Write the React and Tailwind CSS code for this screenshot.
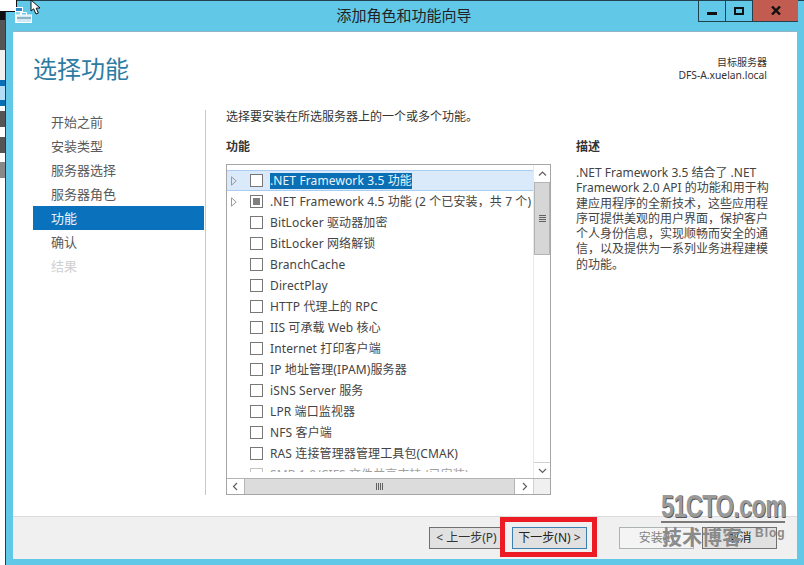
import React from 'react';

const sans = 'font-["Noto_Sans","Noto_Sans_CJK_SC",sans-serif]';

const navItems = [
    { label: '开始之前' },
    { label: '安装类型' },
    { label: '服务器选择' },
    { label: '服务器角色' },
    { label: '功能', active: true },
    { label: '确认' },
    { label: '结果', disabled: true },
];

const features = [
    { label: '.NET Framework 3.5 功能', expand: true, selected: true },
    { label: '.NET Framework 4.5 功能 (2 个已安装，共 7 个)', expand: true, partial: true },
    { label: 'BitLocker 驱动器加密' },
    { label: 'BitLocker 网络解锁' },
    { label: 'BranchCache' },
    { label: 'DirectPlay' },
    { label: 'HTTP 代理上的 RPC' },
    { label: 'IIS 可承载 Web 核心' },
    { label: 'Internet 打印客户端' },
    { label: 'IP 地址管理(IPAM)服务器' },
    { label: 'iSNS Server 服务' },
    { label: 'LPR 端口监视器' },
    { label: 'NFS 客户端' },
    { label: 'RAS 连接管理器管理工具包(CMAK)' },
    { label: 'SMB 1.0/CIFS 文件共享支持 (已安装)', disabled: true },
];

const description = [
    '.NET Framework 3.5 结合了 .NET',
    'Framework 2.0 API 的功能和用于构',
    '建应用程序的全新技术，这些应用程',
    '序可提供美观的用户界面，保护客户',
    '个人身份信息，实现顺畅而安全的通',
    '信，以及提供为一系列业务进程建模',
    '的功能。',
];

// desktop peeking out to the left of the window
const stripBands = [
    'h-[12px] bg-white',
    'h-[8px] bg-[#111]',
    'h-[30px] bg-[#555]',
    'h-[30px] bg-[#f0f0f0]',
    'h-[6px] bg-[#0a6eb4]',
    'h-[14px] bg-[#b5dcf5]',
    'h-[6px] bg-[#0a6eb4]',
    'h-[5px] bg-white',
    'h-[16px] bg-[#555]',
    'h-[10px] bg-white',
    'h-[16px] bg-[#555]',
    'h-[9px] bg-white',
    'h-[16px] bg-[#888]',
    'flex-1 bg-white',
];

const Arrow = ({ d }) => (
    <svg width="9" height="9" viewBox="0 0 9 9" fill="none" stroke="#606060" strokeWidth="1.2">
        <path d={d} />
    </svg>
);

const Row = ({ item }) => (
    <div className={`flex items-center h-[21px] pl-[4px] shrink-0 ${item.selected ? 'bg-[#dbeafb] border-y border-[#a9cdf0]' : ''}`}>
        <div className="w-[19px] shrink-0">
            {item.expand && (
                <svg width="6" height="10" viewBox="0 0 6 10" fill="none" stroke="#9a9a9a">
                    <path d="M0.5 0.8 L5.2 5 L0.5 9.2 Z" />
                </svg>
            )}
        </div>
        <div className={`w-[13px] h-[13px] border bg-white flex items-center justify-center shrink-0 ${item.disabled ? 'border-[#c4c4c4]' : 'border-[#777]'}`}>
            {item.partial && <div className="w-[7px] h-[7px] bg-[#808080]" />}
        </div>
        <span className={`ml-[7px] text-[12px] leading-[16px] tracking-[0.12px] whitespace-nowrap ${item.selected ? 'bg-[#0a6fb5] text-[#eaf4fb]' : item.disabled ? 'text-[#a0a0a0]' : 'text-[#444]'}`}>
            {item.label}
        </span>
    </div>
);

const ScrollBtn = ({ d, className }) => (
    <div className={`flex items-center justify-center bg-white shrink-0 ${className}`}>
        <Arrow d={d} />
    </div>
);

const WizardButton = ({ className, children }) => (
    <div className={`w-[75px] h-[22px] border flex items-center justify-center text-[12px] whitespace-nowrap ${className}`}>
        {children}
    </div>
);

const App = () => {
    return (
        <div className={`relative w-[804px] h-[565px] overflow-hidden flex ${sans}`}>
            <div className="w-[5px] flex flex-col shrink-0">
                {stripBands.map((band, i) => <div key={i} className={band} />)}
            </div>

            <div className="flex-1 min-h-0 flex flex-col bg-[#62c8e8] border-l border-t border-[#23404f]">
                {/* title bar */}
                <div className="relative h-[30px] shrink-0 flex items-center justify-center">
                    <span className="text-[15px] text-[#222] -mt-[1px] mr-[2px]">添加角色和功能向导</span>
                    <div className="absolute top-[-1px] right-[6px] h-[22px] flex border-l border-b border-[#23404f]">
                        <div className="w-[27px] flex items-center justify-center border-r border-[#23404f]">
                            <div className="w-[10px] h-[3px] bg-[#111] mt-[5px]" />
                        </div>
                        <div className="w-[26px] flex items-center justify-center">
                            <div className="w-[10px] h-[8px] border-2 border-[#111]" />
                        </div>
                        <div className="w-[46px] flex items-center justify-center bg-[#c25b50] border-l border-[#23404f]">
                            <svg width="10" height="9" viewBox="0 0 10 9" stroke="#111" strokeWidth="2.4">
                                <path d="M1 0.5 L9 8.5 M9 0.5 L1 8.5" />
                            </svg>
                        </div>
                    </div>
                </div>

                {/* client area */}
                <div className="mx-[7px] mb-[6px] flex-1 min-h-0 flex flex-col bg-white border-t border-[#8fb4c4]">
                    <div className="h-[78px] shrink-0 flex justify-between pl-[20px] pr-[30px]">
                        <h1 className="text-[24px] leading-[32px] mt-[21px] text-[#2c7ba3] font-normal">选择功能</h1>
                        <div className="mt-[24px] text-right text-[10px] leading-[13px] text-[#333]">
                            <div>目标服务器</div>
                            <div className="text-[10.3px]">DFS-A.xuelan.local</div>
                        </div>
                    </div>

                    <div className="flex-1 min-h-0 flex">
                        <div className="w-[192px] shrink-0 pl-[20px]">
                            {navItems.map(item => (
                                <div
                                    key={item.label}
                                    className={`w-[171px] h-[24px] pl-[18px] pt-[1px] flex items-center text-[13px] ${item.active ? 'bg-[#0a72bc] text-[#e8f4fc]' : item.disabled ? 'text-[#d0d0d0]' : 'text-[#5a5a5a]'}`}
                                >
                                    {item.label}
                                </div>
                            ))}
                        </div>

                        <div className="flex flex-col min-h-0 shrink-0 w-[567px] border-l border-[#c8c8c8] pl-[20px] mb-[21px]">
                            <p className="text-[12px] leading-[14px] text-[#333]">选择要安装在所选服务器上的一个或多个功能。</p>
                            <div className="flex flex-1 min-h-0 mt-[15px] gap-[25px]">
                                <div className="w-[325px] flex flex-col min-h-0 shrink-0">
                                    <div className="text-[12px] font-bold leading-[14px] text-[#333] h-[25px] pt-[1px] shrink-0">功能</div>
                                    <div className="flex-1 min-h-0 border border-[#a6a6a6] flex flex-col bg-white">
                                        <div className="flex flex-1 min-h-0">
                                            <div className="flex-1 min-w-0">
                                                <div className="h-[307px] overflow-hidden pt-[5px] flex flex-col">
                                                    {features.map(item => <Row key={item.label} item={item} />)}
                                                </div>
                                            </div>
                                            <div className="w-[17px] shrink-0 flex flex-col border-l border-[#e8e8e8]">
                                                <ScrollBtn d="M1 6.5 L4.5 3 L8 6.5" className="h-[17px]" />
                                                <div className="h-[73px] bg-[#d6d6d6] border border-[#b4b4b4] flex flex-col items-center justify-center gap-[1px] shrink-0">
                                                    <div className="w-[7px] h-[1px] bg-[#606060]" />
                                                    <div className="w-[7px] h-[1px] bg-[#606060]" />
                                                    <div className="w-[7px] h-[1px] bg-[#606060]" />
                                                    <div className="w-[7px] h-[1px] bg-[#606060]" />
                                                </div>
                                                <div className="flex-1 bg-white" />
                                                <ScrollBtn d="M1 3 L4.5 6.5 L8 3" className="h-[16px] border-t border-[#d0d0d0]" />
                                            </div>
                                        </div>
                                        <div className="h-[16px] shrink-0 flex border-t border-[#b4b4b4]">
                                            <ScrollBtn d="M6 1 L2.5 4.5 L6 8" className="w-[17px]" />
                                            <div className="w-[271px] bg-[#dcdcdc] border-x border-[#b4b4b4] flex items-center justify-center gap-[1px]">
                                                <div className="w-[1px] h-[7px] bg-[#606060]" />
                                                <div className="w-[1px] h-[7px] bg-[#606060]" />
                                                <div className="w-[1px] h-[7px] bg-[#606060]" />
                                                <div className="w-[1px] h-[7px] bg-[#606060]" />
                                            </div>
                                            <ScrollBtn d="M3 1 L6.5 4.5 L3 8" className="w-[18px]" />
                                            <div className="flex-1 bg-[#f0f0f0] border-l border-[#d0d0d0]" />
                                        </div>
                                    </div>
                                </div>

                                <div className="flex-1 pt-[1px]">
                                    <div className="text-[12px] font-bold leading-[14px] text-[#333]">描述</div>
                                    <div className="mt-[11px] text-[12px] leading-[15.3px] text-[#444] whitespace-nowrap">
                                        {description.map(line => <div key={line}>{line}</div>)}
                                    </div>
                                </div>
                            </div>
                        </div>
                    </div>

                    {/* footer */}
                    <div className="h-[43px] shrink-0 bg-[#f0f0f0] border-t border-[#dcdcdc] pt-[10px] pl-[416px] flex items-start">
                        <WizardButton className="border-[#707070] bg-[#e1e1e1] text-[#333]">&lt; 上一步(P)</WizardButton>
                        <WizardButton className="ml-[8px] border-[#3c7fb1] bg-[#e1e1e1] text-[#222]">下一步(N) &gt;</WizardButton>
                        <WizardButton className="ml-[32px] border-[#adb2b5] bg-[#f4f4f4] text-[#838383]">安装(I)</WizardButton>
                        <WizardButton className="ml-[8px] border-[#707070] bg-[#e1e1e1] text-[#222]">取消</WizardButton>
                    </div>
                </div>
            </div>

            {/* white box and mouse pointer over the top-left corner */}
            <div className="absolute left-0 top-0 w-[17px] h-[12px] bg-white border-r border-b border-[#111]" />
            <svg className="absolute left-[30px] top-[-1px]" width="13" height="17" viewBox="0 0 13 17">
                <path d="M1 1 L1 12 L3.6 9.8 L6 15 L8.4 14 L6.2 9.2 L10 9 Z" fill="#fff" stroke="#111" strokeWidth="1" />
            </svg>

            {/* app icon */}
            <svg className="absolute left-[15px] top-[7px]" width="17" height="16" viewBox="0 0 17 16" fill="none">
                <rect x="0.5" y="0.5" width="7" height="4" stroke="#fff" fill="#2f86c5" />
                <rect x="0.5" y="4.5" width="5" height="11" stroke="#fff" fill="#8fd6ef" />
                <rect x="1.5" y="8" width="15" height="7.5" fill="#cfeaf5" stroke="#fff" />
                <path d="M6.5 8 V5.5 H11.5 V8" stroke="#fff" />
                <path d="M2 11 H16" stroke="#4a7d96" />
            </svg>

            {/* red highlight round the next button */}
            <div className="absolute left-[500px] top-[517px] w-[97px] h-[40px] border-[5px] border-[#ed1c24]" />

            {/* site watermark */}
            <div className="absolute left-[661px] top-[490px] w-[126px] pointer-events-none font-['Liberation_Sans',sans-serif]">
                <div className="text-[32px] leading-[32px] font-bold text-[#9a9a9a] tracking-[-1px] origin-left scale-x-[0.74] whitespace-nowrap [text-shadow:1px_1px_0_#555]">51CTO.com</div>
                <div className="h-[2px] w-[124px] bg-[#7a7a7a] -mt-[1px]" />
            </div>
            <div className="absolute left-[662px] top-[525px] text-[20px] leading-[26px] font-bold text-[#8a8a8a] whitespace-nowrap pointer-events-none">技术博客</div>
            <div className="absolute left-[755px] top-[526px] text-[12px] leading-[14px] font-bold text-[#8a8a8a] tracking-[1px] pointer-events-none font-['Liberation_Sans',sans-serif]">Blog</div>
        </div>
    );
};

export default App;
